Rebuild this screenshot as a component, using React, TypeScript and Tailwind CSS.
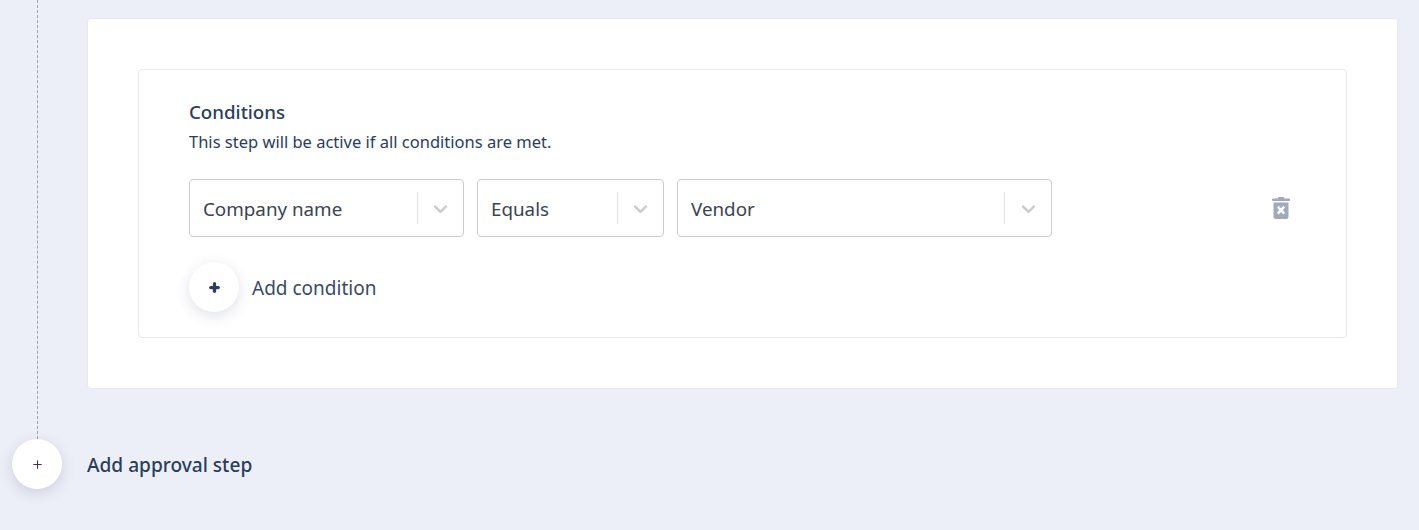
import { Plus } from 'lucide-react';

const FONT = "font-['Noto_Sans',sans-serif]";

function Chevron() {
  return (
    <svg width="23" height="23" viewBox="0 0 20 20" fill="#cccccc" aria-hidden="true">
      <path d="M4.516 7.548c.436-.446 1.043-.481 1.576 0L10 11.295l3.908-3.747c.533-.481 1.141-.446 1.574 0 .436.445.408 1.197 0 1.615-.406.418-4.695 4.502-4.695 4.502a1.095 1.095 0 0 1-1.576 0S4.924 9.581 4.516 9.163c-.409-.418-.436-1.170 0-1.615z" />
    </svg>
  );
}

function Select({ label, width, arrow }: { label: string; width: string; arrow: string }) {
  return (
    <div className={`${width} h-[58px] flex items-center bg-white border border-[#cccccc] rounded-[4px] pl-[13px] text-[18.8px] text-[#3a4353]`}>
      <span className="flex-1 pt-[3px]">{label}</span>
      <span className="w-px h-[32px] bg-[#e2e2e2]" />
      <span className={`${arrow} flex justify-center`}><Chevron /></span>
    </div>
  );
}

function TrashIcon() {
  return (
    <svg width="18" height="24" viewBox="0 0 18 24" aria-hidden="true">
      <path fill="#a2a9b9" d="M6.500 1h5l1 1.500H17a1 1 0 0 1 0 2.500H1a1 1 0 0 1 0-2.500h4.500z" />
      <path fill="#a2a9b9" fillRule="evenodd" d="M1.500 6.500h15v14.500a2 2 0 0 1-2 2h-11a2 2 0 0 1-2-2zM6.600 9.800l-1.700 1.700 2.400 2.600-2.400 2.600 1.700 1.700 2.400-2.500 2.400 2.500 1.700-1.700-2.400-2.600 2.400-2.600-1.700-1.700-2.400 2.500z" />
    </svg>
  );
}

export default function App() {
  return (
    <div className={`${FONT} min-h-[530px] bg-[#eceff7] pl-[12px] pr-[21px] text-[#2b3a55]`}>
      <div className="flex">
        <div className="w-[75px] shrink-0 pl-[25px]">
          <div className="h-full border-l border-dashed border-[#a0a3ab]" />
        </div>
        <div className="flex-1 mt-[18px] mb-[50px] h-[371px] bg-white border border-[#e6e9f3] rounded-[4px] p-[50px]">
          <div className="h-[269px] border border-[#e6e9f3] rounded-[4px] pl-[50px] pr-[56px] pt-[29px]">
            <h3 className="text-[18.7px] leading-[26px] font-medium text-[#2b3d5b]">Conditions</h3>
            <p className="mt-[5px] text-[16.5px] leading-[24px] text-[#2b3d5b]">This step will be active if all conditions are met.</p>
            <div className="mt-[25px] flex items-center">
              <div className="flex gap-[13px]">
                <Select label="Company name" width="w-[275px]" arrow="w-[45px]" />
                <Select label="Equals" width="w-[187px]" arrow="w-[45px]" />
                <Select label="Vendor" width="w-[375px]" arrow="w-[46px]" />
              </div>
              <div className="ml-auto"><TrashIcon /></div>
            </div>
            <div className="mt-[25px] flex items-center gap-[13px]">
              <div className="w-[50px] h-[50px] rounded-full bg-white flex items-center justify-center shadow-[0_4px_14px_rgba(60,70,120,0.16)]">
                <Plus size={13} strokeWidth={6} color="#2b3d5b" />
              </div>
              <span className="pt-[3px] text-[19px] text-[#3a4a66]">Add condition</span>
            </div>
          </div>
        </div>
      </div>
      <div className="flex items-center gap-[25px]">
        <div className="w-[50px] h-[50px] rounded-full bg-white flex items-center justify-center shadow-[0_4px_14px_rgba(60,70,120,0.18)]">
          <Plus size={13} strokeWidth={2} color="#45304f" />
        </div>
        <span className="pt-[3px] text-[19.1px] font-medium text-[#2b3d5b]">Add approval step</span>
      </div>
    </div>
  );
}
